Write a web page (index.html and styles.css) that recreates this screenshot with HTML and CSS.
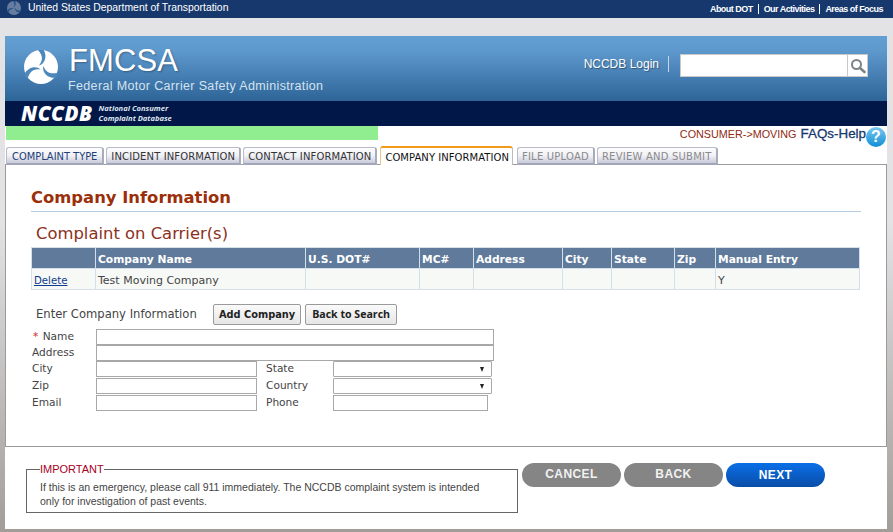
FILE: index.html
```html
<!DOCTYPE html>
<html lang="en">
<head>
<meta charset="utf-8">
<title>NCCDB - Company Information</title>
<link rel="stylesheet" href="styles.css">
</head>
<body>
<div class="topbar">
  <div class="dot">
    <svg class="seal" viewBox="0 0 34 34"><use href="#tri"/></svg>
    <span>United States Department of Transportation</span>
  </div>
  <nav class="toplinks"><a>About DOT</a><a>Our Activities</a><a>Areas of Focus</a></nav>
</div>
<div class="page">
  <header class="masthead">
    <div class="brand">
      <svg class="logo" viewBox="0 0 34 34">
        <g id="tri">
          <circle cx="17" cy="17" r="17" fill="#fff"/>
          <g fill="#4d88bc">
            <path id="cut" d="M13 -1C18 4 20 9 15 15.5C21.5 13.5 23.5 5 19 -1Z"/>
            <use href="#cut" transform="rotate(120 17 17)"/>
            <use href="#cut" transform="rotate(240 17 17)"/>
          </g>
        </g>
      </svg>
      <div class="brandtext">
        <div class="fmcsa">FMCSA</div>
        <div class="fullname">Federal Motor Carrier Safety Administration</div>
      </div>
    </div>
    <div class="login">
      <a class="loginlink">NCCDB Login</a>
      <div class="search">
        <input class="searchbox" type="text" aria-label="Search">
        <span class="searchbtn">
          <svg viewBox="0 0 16 16" width="16" height="16"><circle cx="6.5" cy="6.5" r="4.5" fill="none" stroke="#7d8488" stroke-width="2"/><path d="M10 10l4.5 4" stroke="#7d8488" stroke-width="2.6" stroke-linecap="round"/></svg>
        </span>
      </div>
    </div>
  </header>
  <div class="navy">
    <span class="nccdb">NCCDB</span>
    <span class="nccdbsub">National Consumer<br>Complaint Database</span>
  </div>
  <div class="statusrow">
    <div class="progress"></div>
    <div class="help">
      <span class="crumb">CONSUMER-&gt;MOVING</span>
      <a class="faq">FAQs-Help</a>
      <span class="qmark">?</span>
    </div>
  </div>
  <ul class="tabs">
    <li class="tab done">COMPLAINT TYPE</li>
    <li class="tab">INCIDENT INFORMATION</li>
    <li class="tab">CONTACT INFORMATION</li>
    <li class="tab active">COMPANY INFORMATION</li>
    <li class="tab off">FILE UPLOAD</li>
    <li class="tab off">REVIEW AND SUBMIT</li>
  </ul>
  <main class="panel">
    <h1 class="title">Company Information</h1>
    <h2 class="subtitle">Complaint on Carrier(s)</h2>
    <table class="carriers">
      <colgroup>
        <col class="c1"><col class="c2"><col class="c3"><col class="c4"><col class="c5"><col class="c6"><col class="c7"><col class="c8"><col class="c9">
      </colgroup>
      <thead>
        <tr><th></th><th>Company Name</th><th>U.S. DOT#</th><th>MC#</th><th>Address</th><th>City</th><th>State</th><th>Zip</th><th>Manual Entry</th></tr>
      </thead>
      <tbody>
        <tr><td><a class="del">Delete</a></td><td>Test Moving Company</td><td></td><td></td><td></td><td></td><td></td><td></td><td>Y</td></tr>
      </tbody>
    </table>
    <div class="enter">
      <span class="enterlabel">Enter Company Information</span>
      <button class="btn add" type="button">Add Company</button>
      <button class="btn back" type="button">Back to Search</button>
    </div>
    <form class="form">
      <div class="row"><label class="lab"><span class="req">*</span> Name</label><input class="in wide"></div>
      <div class="row"><label class="lab">Address</label><input class="in wide"></div>
      <div class="row tall"><label class="lab">City</label><input class="in half"><label class="lab2">State</label><span class="sel"></span></div>
      <div class="row tall"><label class="lab">Zip</label><input class="in half"><label class="lab2">Country</label><span class="sel"></span></div>
      <div class="row"><label class="lab">Email</label><input class="in half"><label class="lab2">Phone</label><input class="in phone"></div>
    </form>
  </main>
  <footer class="foot">
    <fieldset class="important">
      <legend>IMPORTANT</legend>
      <p>If this is an emergency, please call 911 immediately. The NCCDB complaint system is intended only for investigation of past events.</p>
    </fieldset>
    <div class="actions">
      <a class="pill grey">CANCEL</a>
      <a class="pill grey">BACK</a>
      <a class="pill blue">NEXT</a>
    </div>
  </footer>
</div>
</body>
</html>
```
FILE: styles.css
```css
* { box-sizing: border-box; }
html, body { height: 100%; }
body {
  margin: 0;
  overflow: hidden;
  background: linear-gradient(#e3e3e6 0, #e3e3e6 220px, #a39d99 532px);
  font-family: "DejaVu Sans", sans-serif;
}
.topbar {
  height: 18px;
  background: #16386c;
  display: flex;
  justify-content: space-between;
  align-items: center;
  color: #fff;
  font-family: "Liberation Sans", sans-serif;
}
.dot { display: flex; align-items: center; padding-left: 7px; font-size: 10.4px; gap: 7px; margin-top: -4px; }
.seal { width: 14px; height: 14px; opacity: .35; margin-top: 1px; }
.toplinks { display: flex; font-size: 9px; font-weight: bold; padding-right: 10px; margin-top: -1px; letter-spacing: -.53px; }
.toplinks a { padding: 0 0 0 5px; margin-left: 5px; border-left: 1px solid #fff; line-height: 10px; }
.toplinks a:first-child { border: 0; }

.page { margin: 18px 6px 0 5px; background: #fff; height: 493px; }
.masthead {
  height: 65px;
  background: linear-gradient(#639fd2 0, #5f9ace 20%, #2e6599 100%);
  display: flex;
  justify-content: space-between;
  color: #fff;
}
.brand { display: flex; padding: 14px 0 0 19px; }
.logo { width: 34px; height: 34px; }
.brandtext { margin-left: 11px; margin-top: -5px; font-family: "Liberation Sans", sans-serif; }
.fmcsa { font-size: 31px; line-height: 32px; letter-spacing: .1px; text-shadow: 1px 1px 2px rgba(0,0,0,.3); height: 32px; }
.fullname { font-size: 12.5px; line-height: 14px; letter-spacing: .35px; color: #d5e3ef; margin-left: -1px; margin-top: 2px; }
.login { display: flex; align-items: flex-start; padding: 18px 19px 0 0; }
.loginlink { font-family: "Liberation Sans", sans-serif; font-size: 12px; padding-right: 9px; border-right: 1px solid #c7d7e5; height: 16px; margin-top: 2px; line-height: 16px; text-shadow: 1px 1px 1px rgba(0,0,0,.35); }
.search { display: flex; margin-left: 11px; }
.searchbox { width: 168px; height: 23px; border: 1px solid #c9c9c9; background: #fff; padding: 0; }
.searchbtn { width: 21px; height: 23px; background: #fff; border: 1px solid #c9c9c9; display: flex; align-items: center; justify-content: center; margin-left: -1px; }

.navy { height: 25px; background: #001747; display: flex; align-items: center; color: #fff; padding-left: 16px; }
.nccdb { font-family: "Open Sans", sans-serif; font-weight: 800; font-style: italic; font-size: 20.5px; letter-spacing: .5px; line-height: 25px; }
.nccdbsub { font-family: "Open Sans", sans-serif; font-weight: 700; font-style: italic; font-size: 7.6px; line-height: 9.5px; margin-left: 6px; color: #dfe5ee; }

.statusrow { height: 20px; display: flex; justify-content: space-between; align-items: flex-start; }
.progress { width: 372px; height: 14px; background: #90ee90; margin-left: 1px; }
.help { display: flex; align-items: flex-start; font-family: "Liberation Sans", sans-serif; }
.crumb { font-size: 10.8px; color: #8f2a10; line-height: 14px; margin-top: 1px; }
.faq { font-size: 13.4px; color: #16386c; line-height: 16px; margin-left: 4px; -webkit-text-stroke: .3px #16386c; }
.qmark { width: 20px; height: 20px; margin: 1px 1px 0 0; border-radius: 50%; background: linear-gradient(#7cc8ee, #0f8fd6); color: #fff; font-weight: bold; font-size: 16px; line-height: 20px; text-align: center; }

.tabs { list-style: none; margin: 1px 0 -1px 1px; padding: 0; height: 18px; display: flex; gap: 2px; font-size: 10px; letter-spacing: .13px; line-height: 17px; position: relative; z-index: 1; }
.tab {
  height: 18px;
  padding: 0 4px;
  border: 1px solid #b9bcc8;
  border-bottom: 2px solid #a3a6b8;
  border-right: 2px solid #a9acb9;
  border-radius: 3px 3px 0 0;
  background: linear-gradient(#fdfdfe 0, #f1f1f6 50%, #c9cadb 100%);
  color: #333;
  white-space: nowrap;
}
.done { color: #1d3f7a; font-size: 9.9px; letter-spacing: 0; padding: 0 5px; }
.active { height: 19px; margin: -1px 2px 0 1px; background: #fff; border: 0; border-top: 2px solid #f49a1a; border-left: 1px solid #e9c48a; border-right: 1px solid #bbb; color: #111; padding: 1px 3px 0 4px; letter-spacing: .05px; }
.off { color: #8a8a8a; letter-spacing: .22px; }

.panel { height: 283px; border: 1px solid #9a9a9a; padding: 0 25px; }
.title { margin: 0; height: 47px; border-bottom: 1px solid #b5cde2; font-size: 16.4px; line-height: 20px; padding-top: 23px; color: #9b2f0a; font-weight: bold; width: 830px; }
.subtitle { margin: 12px 0 0 5px; font-size: 16.4px; font-weight: normal; line-height: 20px; color: #8c3120; height: 23px; }
.carriers { border-collapse: collapse; table-layout: fixed; width: 828px; font-size: 11px; }
.c1 { width: 64px; } .c2 { width: 210px; } .c3 { width: 114px; } .c4 { width: 54px; } .c5 { width: 89px; }
.c6 { width: 49px; } .c7 { width: 63px; } .c8 { width: 41px; } .c9 { width: 144px; }
.carriers th, .carriers td { border: 1px solid #d3e0e8; height: 21px; padding: 2px 2px 0; text-align: left; }
.carriers th { background: #5f7a9a; color: #fff; font-weight: bold; font-size: 10.7px; }
.carriers td { background: #f7f9f7; color: #444; }
.del { color: #0f3c8c; text-decoration: underline; font-size: 10.2px; }

.enter { display: flex; align-items: center; margin-top: 13px; height: 22px; padding-left: 5px; font-size: 11.6px; color: #444; }
.enterlabel { width: 177px; }
.btn { height: 21px; margin-right: 4px; font-weight: bold; color: #222; background: linear-gradient(#fafafa, #e6e6e6); border: 1px solid #9a9a9a; border-radius: 2px; }
.add { font-family: "DejaVu Sans", sans-serif; font-size: 9.8px; padding: 0 5px; }
.back { font-family: "Open Sans", sans-serif; font-size: 10.6px; padding: 0 6px; }

.form { margin-top: 4px; font-size: 10.6px; line-height: 14px; color: #444; }
.row { display: flex; align-items: flex-start; height: 16px; }
.tall { height: 17px; }
.lab { width: 65px; padding-left: 1px; }
.req { color: #c22; margin-left: 1px; padding-right: 1px; }
.lab2 { width: 67px; margin-left: 9px; }
.in { height: 16px; border: 1px solid #a8a8a8; background: #fff; padding: 0; }
.wide { width: 398px; }
.half { width: 161px; }
.phone { width: 155px; }
.sel { width: 159px; height: 16px; border: 1px solid #a8a8a8; border-radius: 1px; background: #fff; display: flex; justify-content: flex-end; align-items: center; padding-right: 7px; }
.sel::after { content: ""; border-left: 2.5px solid transparent; border-right: 2.5px solid transparent; border-top: 5px solid #222; }

.foot { height: 83px; padding: 16px 0 0 21px; display: flex; align-items: flex-start; font-family: "Liberation Sans", sans-serif; }
.important { width: 492px; height: 50px; margin: 0; padding: 0 30px 0 13px; border: 1px solid #666; font-size: 10.5px; color: #444; }
.important legend { padding: 0; color: #a5001e; font-size: 11px; line-height: 12px; }
.important p { margin: 5px 0 0; line-height: 14px; }
.actions { display: flex; gap: 3px; margin-left: 4px; }
.pill { width: 99px; height: 24px; border-radius: 12px; font-weight: bold; font-size: 12px; line-height: 23px; color: #fff; text-align: center; letter-spacing: .4px; }
.grey { background: #858585; color: #f1f1f1; }
.blue { background: linear-gradient(#0a6fe8, #0a4da6); line-height: 25px; }
```
